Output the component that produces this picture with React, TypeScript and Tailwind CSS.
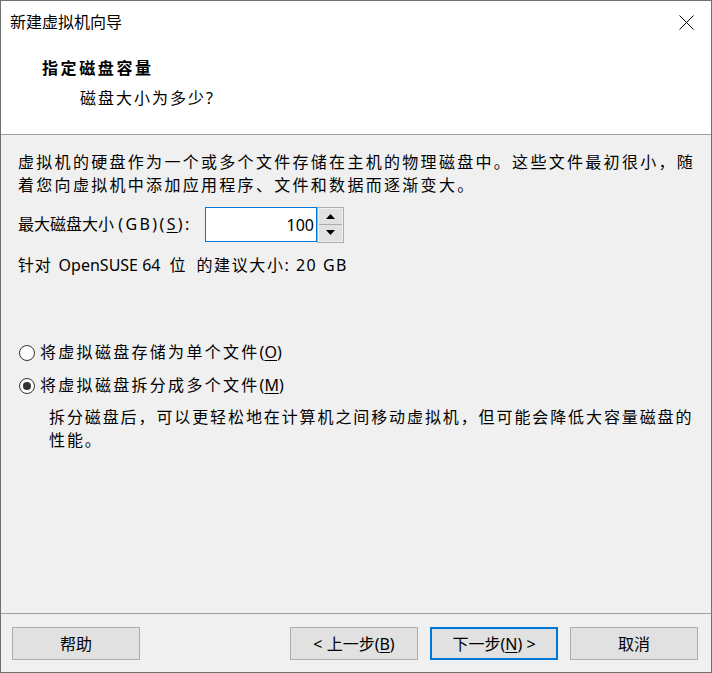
import React from "react";

const font = "font-['Noto_Sans','Noto_Sans_CJK_SC',sans-serif]";

function Radio({ checked }: { checked?: boolean }) {
  return (
    <span className="flex h-[16px] w-[16px] shrink-0 items-center justify-center rounded-full border border-[#333333] bg-white">
      {checked && <span className="h-[8px] w-[8px] rounded-full bg-[#333333]" />}
    </span>
  );
}

function Btn({ children, primary }: { children: React.ReactNode; primary?: boolean }) {
  return (
    <button
      className={
        primary
          ? "flex h-[33px] w-[128px] items-center justify-center border-2 border-[#0078d7] bg-[#e1e1e1] text-[16px] text-black"
          : "flex h-[33px] w-[128px] items-center justify-center border border-[#adadad] bg-[#e1e1e1] text-[16px] text-black"
      }
    >
      {children}
    </button>
  );
}

export default function App() {
  return (
    <div className={`${font} flex h-[673px] w-[712px] flex-col border border-[#707070] bg-[#f0f0f0] text-black`}>
      {/* title bar */}
      <div className="flex h-[42px] shrink-0 items-center justify-between bg-white pl-[9px] pr-[17px]">
        <span className="text-[16px] leading-[22px]">新建虚拟机向导</span>
        <svg width="15" height="15" viewBox="0 0 15 15" className="text-black">
          <path d="M0.5 0.5 L14.5 14.5 M14.5 0.5 L0.5 14.5" stroke="currentColor" strokeWidth="1" fill="none" />
        </svg>
      </div>

      {/* header */}
      <div className="h-[92px] shrink-0 border-b border-[#a0a0a0] bg-white pt-[14px]">
        <div className="pl-[41px] text-[16px] font-bold leading-[22px] tracking-[2.6px]">指定磁盘容量</div>
        <div className="mt-[8px] pl-[79px] text-[16px] leading-[22px] tracking-[2px]">磁盘大小为多少?</div>
      </div>

      {/* body */}
      <div className="flex flex-1 flex-col pl-[17px] pr-[8px] pt-[16px]">
        <p className="text-[16px] leading-[23px] tracking-[2.3px]">
          虚拟机的硬盘作为一个或多个文件存储在主机的物理磁盘中。这些文件最初很小，随着您向虚拟机中添加应用程序、文件和数据而逐渐变大。
        </p>

        <div className="mt-[10px] flex h-[35px] items-center">
          <span className="w-[187px] text-[16px] leading-[23px]">
            最大磁盘大小{" "}
            <span className="tracking-[2.4px]">
              (GB)(<span className="underline underline-offset-2">S</span>):
            </span>
          </span>
          <div className="flex h-[35px] w-[112px] items-center justify-end border border-[#0078d7] bg-white pr-[2px] text-[16px]">
            100
          </div>
          <div className="flex h-[36px] w-[27px] flex-col border border-[#adadad] bg-[#f0f0f0] p-[1px]">
            <div className="flex flex-1 items-center justify-center border-b border-[#adadad] bg-[#e1e1e1]">
              <svg width="9" height="5" viewBox="0 0 9 5">
                <path d="M0 5 L4.5 0 L9 5 Z" fill="#000" />
              </svg>
            </div>
            <div className="flex flex-1 items-center justify-center bg-[#e1e1e1]">
              <svg width="9" height="5" viewBox="0 0 9 5">
                <path d="M0 0 L9 0 L4.5 5 Z" fill="#000" />
              </svg>
            </div>
          </div>
        </div>

        <div className="mt-[12px] flex items-center text-[16px] leading-[23px]">
          <span className="tracking-[0.8px]">针对</span>
          <span className="ml-[7px]">OpenSUSE 64</span>
          <span className="ml-[9px]">位</span>
          <span className="ml-[11px] tracking-[1.6px]">的建议大小</span>
          <span className="tracking-[1.5px]">: 20 GB</span>
        </div>

        <div className="mt-[64px] flex h-[23px] items-center gap-[5px] pl-[1px]">
          <Radio />
          <span className="text-[16px] leading-[23px] tracking-[2.3px]">
            将虚拟磁盘存储为单个文件<span className="tracking-normal">(<span className="underline underline-offset-2">O</span>)</span>
          </span>
        </div>

        <div className="mt-[10px] flex h-[23px] items-center gap-[5px] pl-[1px]">
          <Radio checked />
          <span className="text-[16px] leading-[23px] tracking-[2.3px]">
            将虚拟磁盘拆分成多个文件<span className="tracking-normal">(<span className="underline underline-offset-2">M</span>)</span>
          </span>
        </div>

        <p className="mt-[9px] pl-[31px] text-[16px] leading-[23px] tracking-[1.9px]">
          拆分磁盘后，可以更轻松地在计算机之间移动虚拟机，但可能会降低大容量磁盘的性能。
        </p>
      </div>

      {/* footer */}
      <div className="flex h-[59px] shrink-0 items-start border-t border-[#a0a0a0] pl-[11px] pr-[13px] pt-[13px]">
        <Btn>帮助</Btn>
        <div className="flex-1" />
        <div className="flex gap-[12px]">
          <Btn>
            &lt; 上一步(<span className="underline underline-offset-2">B</span>)
          </Btn>
          <Btn primary>
            下一步(<span className="underline underline-offset-2">N</span>) &gt;
          </Btn>
          <Btn>取消</Btn>
        </div>
      </div>
    </div>
  );
}
